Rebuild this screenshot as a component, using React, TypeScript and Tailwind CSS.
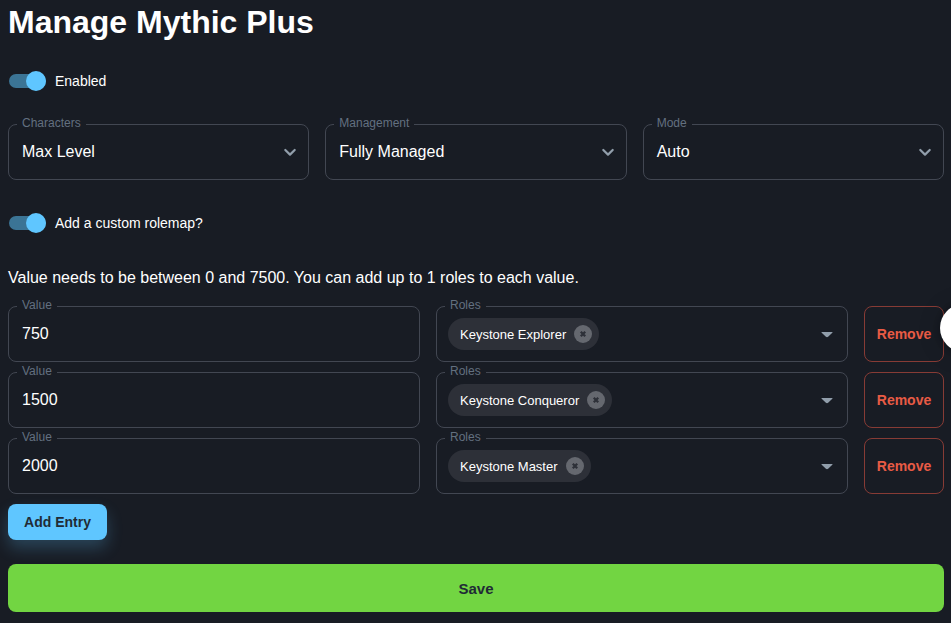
import type { ReactNode } from "react";

function Outline({ label, children }: { label: string; children: ReactNode }) {
  return (
    <fieldset className="-mt-[6px] h-[62px] min-w-0 flex-1 rounded-lg border border-[#424752] pl-2 pr-[11px]">
      <legend className="px-[5px] text-[12px] leading-[12px] text-[#637080]">
        <span className="relative -top-px block h-3">{label}</span>
      </legend>
      <div className="flex h-[45px] items-center justify-between pb-[1px]">{children}</div>
    </fieldset>
  );
}

function Toggle({ label }: { label: string }) {
  return (
    <label className="flex h-[38px] items-center text-[14px]">
      <span className="ml-[1px] flex h-[14px] w-[37px] items-center justify-end rounded-full bg-[#3b7495]">
        <span className="size-5 shrink-0 rounded-full bg-[#5fc6ff]" />
      </span>
      <span className="ml-[9px]">{label}</span>
    </label>
  );
}

function Select({ label, value }: { label: string; value: string }) {
  return (
    <Outline label={label}>
      <span className="pl-[5px] text-[16px]">{value}</span>
      <svg width="14" height="14" viewBox="0 0 14 14" fill="none" stroke="#919eab" strokeWidth="2.2" strokeLinecap="round" strokeLinejoin="round">
        <path d="M2.3 5l4.7 4.6L11.7 5" />
      </svg>
    </Outline>
  );
}

function Entry({ value, role }: { value: string; role: string }) {
  return (
    <div className="flex h-14 gap-4">
      <Outline label="Value">
        <span className="pl-[5px] text-[16px]">{value}</span>
      </Outline>
      <Outline label="Roles">
        <span className="ml-[3px] flex h-8 items-center rounded-full bg-[#2d3038] pl-3 pr-[7px] text-[13px]">
          <span className="pt-[2px]">{role}</span>
          <svg className="ml-2" width="18" height="18" viewBox="0 0 18 18">
            <circle cx="9" cy="9" r="9" fill="#65686f" />
            <path d="M6.8 6.8l4.4 4.4M11.2 6.8l-4.4 4.4" stroke="#2d3038" strokeWidth="2.3" />
          </svg>
        </span>
        <svg className="mr-[3px]" width="12" height="8" viewBox="0 0 12 8">
          <path d="M1 2h10c.6 0 .7.4.3.8L7.1 6.7c-.7.6-1.5.6-2.2 0L.7 2.8C.3 2.4.4 2 1 2z" fill="#919eab" />
        </svg>
      </Outline>
      <button className="w-20 rounded-lg border border-[#873b35] text-[14px] font-bold text-[#e85b45]">Remove</button>
    </div>
  );
}

export default function App() {
  return (
    <main className="relative h-[623px] w-[951px] overflow-hidden bg-[#181c24] pl-2 pr-[7px] font-['Liberation_Sans',Arial,sans-serif] text-white">
      <h1 className="h-[62px] pt-[2px] text-[32px] font-bold leading-10">Manage Mythic Plus</h1>
      <Toggle label="Enabled" />
      <div className="mt-6 flex h-14 gap-4">
        <Select label="Characters" value="Max Level" />
        <Select label="Management" value="Fully Managed" />
        <Select label="Mode" value="Auto" />
      </div>
      <div className="mt-6">
        <Toggle label="Add a custom rolemap?" />
      </div>
      <p className="mt-6 h-10 text-[16px] leading-6">Value needs to be between 0 and 7500. You can add up to 1 roles to each value.</p>
      <div className="flex flex-col gap-[10px]">
        <Entry value="750" role="Keystone Explorer" />
        <Entry value="1500" role="Keystone Conqueror" />
        <Entry value="2000" role="Keystone Master" />
      </div>
      <button className="mt-[10px] block h-9 w-[99px] rounded-lg bg-[#5fc6ff] text-[14px] font-bold text-[#212b36] shadow-[0_8px_16px_0_rgba(95,198,255,0.24)]">
        Add Entry
      </button>
      <button className="mt-6 block h-12 w-full rounded-lg bg-[#72d542] pt-[2px] text-[15px] font-bold text-[#212b36]">Save</button>
      <span className="absolute left-[940px] top-[304px] size-12 rounded-full bg-white shadow-[0_1px_6px_0_rgba(0,0,0,0.3),0_2px_24px_0_rgba(0,0,0,0.16)]" />
    </main>
  );
}
